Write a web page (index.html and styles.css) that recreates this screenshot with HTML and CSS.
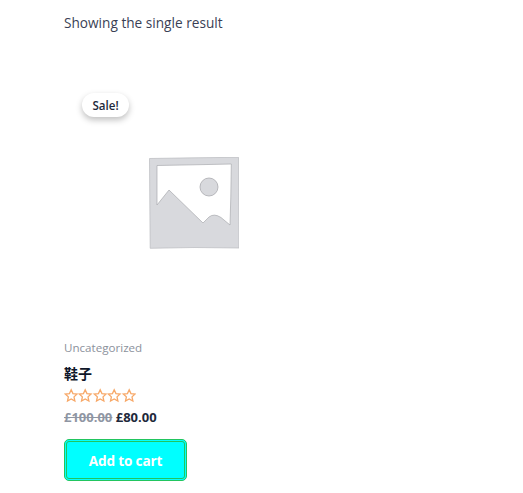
FILE: index.html
```html
<!DOCTYPE html>
<html lang="en">
<head>
<meta charset="utf-8">
<title>Shop</title>
<link rel="stylesheet" href="styles.css">
</head>
<body>
<main class="shop">
  <p class="count">Showing the single result</p>
  <article class="product">
    <div class="thumb">
      <span class="sale">Sale!</span>
      <svg class="placeholder" viewBox="0 0 90 92" aria-hidden="true">
        <defs>
          <filter id="rough" x="-5%" y="-5%" width="110%" height="110%">
            <feTurbulence type="fractalNoise" baseFrequency="0.12" numOctaves="2" seed="4" result="n"/>
            <feDisplacementMap in="SourceGraphic" in2="n" scale="1.2"/>
            <feGaussianBlur stdDeviation="0.3"/>
          </filter>
        </defs>
        <g filter="url(#rough)">
          <path class="frame" fill-rule="evenodd" d="M0.5 1.5 L45 0.8 L89.5 0.3 L89.6 45 L90 91 L45 90.5 L1.2 91.3 L0.8 45 Z"/>
          <path class="edge" d="M8 8.5 L45 7.8 L82.3 7 L81.8 40 L81 68 L72 60.5 Q65 56 60 60 L54 66 L20 33 L8 48 Z"/>
          <circle class="sun" cx="60" cy="30" r="9"/>
        </g>
      </svg>
    </div>
    <p class="category">Uncategorized</p>
    <h2 class="title">鞋子</h2>
    <div class="stars" aria-label="Rated 0 out of 5">
      <svg viewBox="0 0 24 24"><path d="M12 2.5l2.9 6.3 6.9.8-5.1 4.7 1.4 6.8-6.1-3.4-6.1 3.4 1.4-6.8-5.1-4.7 6.9-.8z"/></svg>
      <svg viewBox="0 0 24 24"><path d="M12 2.5l2.9 6.3 6.9.8-5.1 4.7 1.4 6.8-6.1-3.4-6.1 3.4 1.4-6.8-5.1-4.7 6.9-.8z"/></svg>
      <svg viewBox="0 0 24 24"><path d="M12 2.5l2.9 6.3 6.9.8-5.1 4.7 1.4 6.8-6.1-3.4-6.1 3.4 1.4-6.8-5.1-4.7 6.9-.8z"/></svg>
      <svg viewBox="0 0 24 24"><path d="M12 2.5l2.9 6.3 6.9.8-5.1 4.7 1.4 6.8-6.1-3.4-6.1 3.4 1.4-6.8-5.1-4.7 6.9-.8z"/></svg>
      <svg viewBox="0 0 24 24"><path d="M12 2.5l2.9 6.3 6.9.8-5.1 4.7 1.4 6.8-6.1-3.4-6.1 3.4 1.4-6.8-5.1-4.7 6.9-.8z"/></svg>
    </div>
    <p class="price"><del>£100.00</del> <ins>£80.00</ins></p>
    <a class="cart" href="#">Add to cart</a>
  </article>
</main>
</body>
</html>
```
FILE: styles.css
```css
html, body {
  margin: 0;
  padding: 0;
  background: #fff;
}
body {
  font-family: "Open Sans", "Noto Sans CJK SC", sans-serif;
  color: #334155;
}
.shop {
  padding: 13px 0 0 64px;
}
.count {
  margin: 0 0 40px;
  font-size: 13.65px;
  line-height: 20px;
  color: #3a3f55;
}
.product {
  width: 260px;
}
.thumb {
  position: relative;
  height: 260px;
  display: flex;
  align-items: center;
  justify-content: center;
  margin-bottom: 5px;
}
.sale {
  position: absolute;
  left: 18px;
  top: 20px;
  width: 47px;
  height: 24px;
  display: flex;
  align-items: center;
  justify-content: center;
  border-radius: 12px;
  background: #fff;
  font-size: 11.6px;
  font-weight: 600;
  color: #1e293b;
  box-shadow: 0 3px 6px rgba(0, 0, 0, 0.25);
}
.placeholder {
  width: 90px;
  height: 92px;
}
.frame {
  fill: #d8d9dd;
  stroke: #b9babf;
  stroke-width: 0.7;
}
.edge {
  fill: #fff;
  stroke: #a9aaaf;
  stroke-width: 0.7;
}
.sun {
  fill: #d8d9dd;
  stroke: #a9aaaf;
  stroke-width: 0.8;
}
.category {
  margin: 0 0 6px;
  font-size: 11.6px;
  line-height: 20px;
  color: #8b919c;
}
.title {
  margin: 0 0 5px;
  font-size: 14px;
  line-height: 19px;
  font-weight: 700;
  color: #0f172a;
}
.stars {
  display: flex;
  height: 15px;
  margin-bottom: 4px;
}
.stars svg {
  width: 14.4px;
  height: 15px;
  fill: none;
  stroke: #f7a868;
  stroke-width: 2.2;
}
.price {
  margin: 0 0 12px;
  font-size: 13px;
  line-height: 20px;
  font-weight: 700;
}
.price del {
  color: #8f96a3;
}
.price ins {
  text-decoration: none;
  color: #1e293b;
}
.cart {
  display: flex;
  align-items: center;
  justify-content: center;
  box-sizing: border-box;
  width: 123px;
  height: 42px;
  border: 1px solid #22c55e;
  outline: 1px solid #22c55e;
  outline-offset: -3px;
  border-radius: 5px;
  background: #00ffff;
  color: #fff;
  font-size: 13.6px;
  font-weight: 700;
  letter-spacing: -0.15px;
  text-decoration: none;
}
```
